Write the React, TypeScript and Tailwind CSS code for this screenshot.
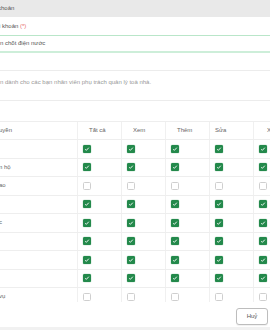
import React from "react";

const cols = ["Tất cả", "Xem", "Thêm", "Sửa", "Xoá"];
const headPad = ["pl-[11px]", "pl-[11px]", "pl-[11px]", "pl-[5px]", "pl-[13px]"];

const rows: { label: string; on: boolean }[] = [
  { label: "", on: true },
  { label: "n hộ", on: true },
  { label: "ao", on: false },
  { label: "", on: true },
  { label: "c", on: true },
  { label: "", on: true },
  { label: "", on: true },
  { label: "", on: true },
  { label: "vụ", on: false },
];

function Box({ on }: { on: boolean }) {
  return on ? (
    <div className="w-[8px] h-[8px] rounded-[1.5px] bg-[#23894b] flex items-center justify-center shadow-[0_0_1px_#23894b]">
      <svg width="6" height="6" viewBox="0 0 6 6">
        <path d="M1.2 3.3 L2.4 4.3 L4.8 1.7" fill="none" stroke="white" strokeWidth="0.9" />
      </svg>
    </div>
  ) : (
    <div className="w-[8px] h-[8px] rounded-[1.5px] border border-[#cfcfcf] bg-white" />
  );
}

export default function App() {
  return (
    <div
      className="w-[270px] h-[330px] overflow-hidden bg-white text-[6px] text-[#555]"
      style={{ fontFamily: '"Liberation Sans", Arial, sans-serif' }}
    >
      <div className="h-[17px] bg-[#e9e9e9] flex items-center">
        <span className="-ml-[2px]">khoản</span>
      </div>

      <div className="h-[18px] flex items-end pb-[4px]">
        <span className="-ml-[1px]">
          i khoản <span className="text-[#e66a6a]">(*)</span>
        </span>
      </div>
      <div className="h-[1px] bg-[#b9e6c9]" />
      <div className="h-[15px] flex items-center">
        <span>n chốt điện nước</span>
      </div>
      <div className="h-[2px] bg-[#cdeed9]" />

      <div className="h-[17px]" />
      <div className="h-[1px] bg-[#ececec]" />
      <div className="h-[29px] pt-[7px] text-[#999]">
        n dành cho các bạn nhân viên phụ trách quản lý toà nhà.
      </div>
      <div className="h-[1px] bg-[#ececec]" />
      <div className="h-[20px]" />

      <div className="h-[181px] overflow-hidden border-t border-[#eeeeee] text-[#666]">
        <div className="flex h-[18px] border-b border-[#eeeeee]">
          <div className="w-[78px] shrink-0 flex items-center border-r border-[#f0f0f0]">
            <span className="-ml-[1px]">uyền</span>
          </div>
          {cols.map((c, i) => (
            <div
              key={c}
              className={`w-[44px] shrink-0 flex items-center border-r border-[#f0f0f0] ${headPad[i]}`}
            >
              {c}
            </div>
          ))}
        </div>
        {rows.map((r, ri) => (
          <div key={ri} className="flex h-[18.5px] border-b border-[#eeeeee]">
            <div className="w-[78px] shrink-0 flex items-center border-r border-[#f0f0f0]">
              <span className="-ml-[1px]">{r.label}</span>
            </div>
            {cols.map((c) => (
              <div
                key={c}
                className="w-[44px] shrink-0 flex items-center pl-[5px] border-r border-[#f0f0f0]"
              >
                <Box on={r.on} />
              </div>
            ))}
          </div>
        ))}
      </div>

      <div className="h-[25px] flex justify-end items-start pt-[6px] pr-[2px]">
        <button className="w-[32px] h-[17px] rounded-[3px] border border-[#bdbdbd] bg-white text-[6px] text-[#555] shadow-[0_1px_1px_rgba(0,0,0,0.06)]">
          Huỷ
        </button>
      </div>
      <div className="h-[3px] bg-[#f1f1f1]" />
    </div>
  );
}
